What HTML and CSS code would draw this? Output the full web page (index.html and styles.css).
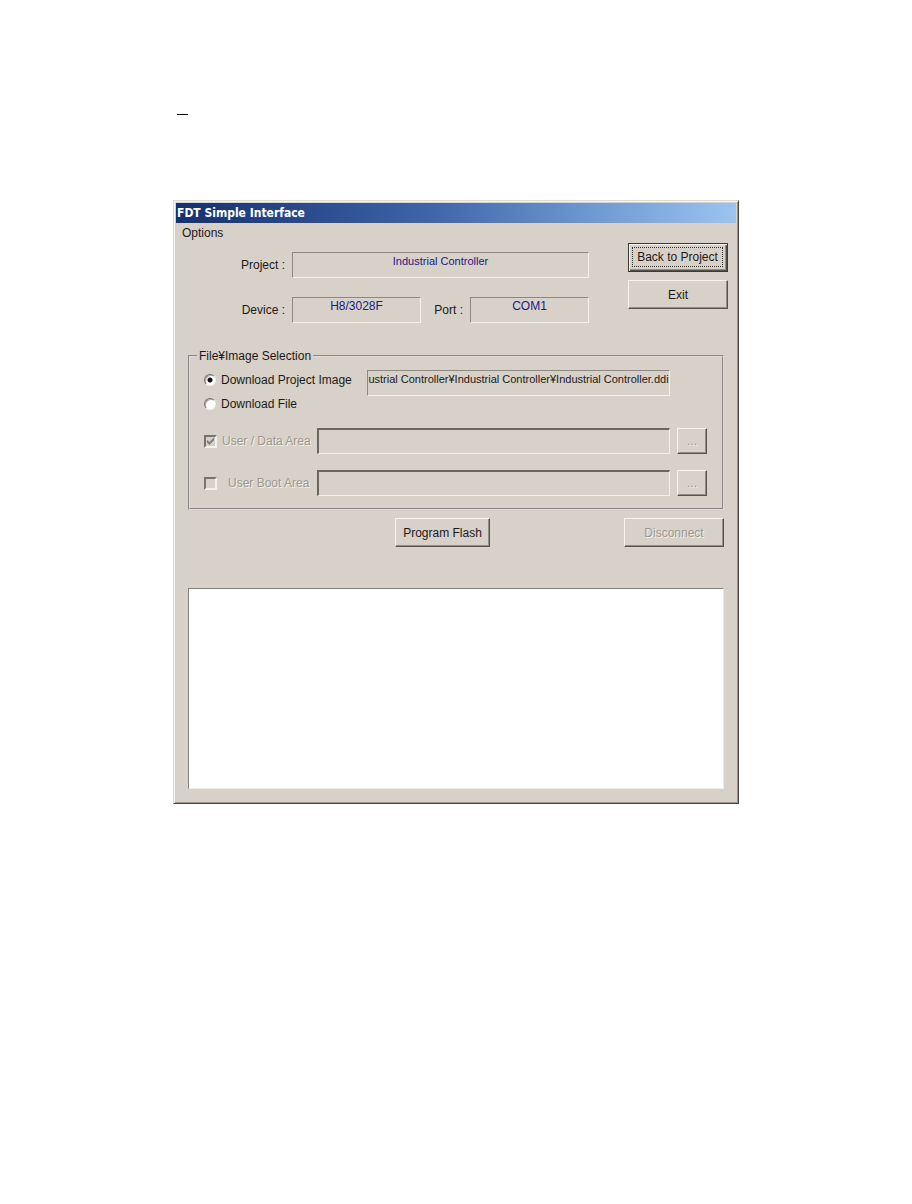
FILE: index.html
```html
<!DOCTYPE html>
<html lang="en">
<head>
  <meta charset="UTF-8">
  <meta name="viewport" content="width=device-width, initial-scale=1.0">
  <link rel="stylesheet" href="styles.css">
  <title>FDT Simple Interface</title>
</head>
<body>
  <div class="mark"></div>
  <div class="window">
    <div class="titlebar">FDT Simple Interface</div>
    <div class="menubar">
      <button class="menu" type="button">Options</button>
    </div>

    <form class="content">
      <div class="top">
        <div class="info">
          <label for="project">Project :</label>
          <output class="field wide long" id="project">Industrial Controller</output>
          <label for="device">Device :</label>
          <output class="field" id="device">H8/3028F</output>
          <label for="port">Port :</label>
          <output class="field" id="port">COM1</output>
        </div>
        <div class="actions">
          <button class="btn default" type="button"><span>Back to Project</span></button>
          <button class="btn" type="button">Exit</button>
        </div>
      </div>

      <fieldset class="group">
        <legend>File¥Image Selection</legend>
        <div class="source">
          <div class="choices">
            <label class="choice"><input class="radio" type="radio" name="source" checked>Download Project Image</label>
            <label class="choice"><input class="radio" type="radio" name="source">Download File</label>
          </div>
          <div class="field long path">ustrial Controller¥Industrial Controller¥Industrial Controller.ddi</div>
        </div>
        <div class="area">
          <label class="choice off"><input class="check" type="checkbox" checked disabled>User / Data Area</label>
          <input class="file" type="text" aria-label="User / Data Area file" disabled>
          <button class="btn browse" type="button" disabled>...</button>
        </div>
        <div class="area">
          <label class="choice off boot"><input class="check" type="checkbox" disabled>User Boot Area</label>
          <input class="file" type="text" aria-label="User Boot Area file" disabled>
          <button class="btn browse" type="button" disabled>...</button>
        </div>
      </fieldset>

      <div class="commands">
        <button class="btn program" type="button">Program Flash</button>
        <button class="btn" type="button" disabled>Disconnect</button>
      </div>

      <textarea class="log" aria-label="Log" readonly></textarea>
    </form>
  </div>
</body>
</html>
```

FILE: styles.css
```css
* {
  box-sizing: border-box;
}
body {
  margin: 0;
  padding: 114px 173px 0;
  background: #fff;
  color: #1c1a18;
  font: 12px/16px "Liberation Sans", Arial, sans-serif;
}
button, input, textarea {
  font: inherit;
  color: inherit;
}
.mark {
  width: 11px;
  margin: 0 0 85px 4px;
  border-top: 1px solid #000;
}

/* window frame */
.window {
  padding: 2px;
  background: #d7d1c9;
  border: 1px solid;
  border-color: #dcdcd6 #45443f #45443f #dcdcd6;
  box-shadow: inset 1px 1px #f6f5f0, inset -1px -1px #96958f;
}
.titlebar {
  height: 20px;
  padding-left: 1px;
  background: linear-gradient(to right, #15306f, #3f64a8 45%, #6f9ad2 75%, #9cc4f0);
  color: #fff;
  font: bold 12px/20px "DejaVu Sans Condensed", "DejaVu Sans", sans-serif;
}
.menubar {
  padding: 2px 0 0 6px;
}
.menu {
  display: block;
  padding: 0;
  border: 0;
  background: none;
}
.content {
  padding: 2px 12px 12px;
}

/* project info */
.top {
  display: flex;
  align-items: flex-start;
  gap: 39px;
  margin-right: -4px;
}
.info {
  flex: 1;
  display: grid;
  grid-template-columns: 104px 129fr 49px 119fr;
  row-gap: 19px;
  padding-top: 9px;
  align-items: center;
}
.info label {
  padding-right: 7px;
  text-align: right;
}
.field {
  height: 26px;
  border: 1px solid;
  border-color: #8d8982 #f3f0ea #f3f0ea #8d8982;
  color: #241a80;
  text-align: center;
  white-space: nowrap;
}
.wide {
  grid-column: span 3;
}
.long {
  font-size: 11px;
}
.actions {
  display: flex;
  flex-direction: column;
  gap: 8px;
}

/* buttons */
.btn {
  width: 100px;
  height: 29px;
  padding: 0;
  background: #d7d1c9;
  border: 1px solid;
  border-color: #f6f3ee #56524c #56524c #f6f3ee;
  box-shadow: inset -1px -1px #918c85;
}
.default {
  padding: 2px;
  border-color: #3c3935;
  box-shadow: inset 1px 1px #f6f3ee, inset -1px -1px #56524c, inset -2px -2px #918c85;
}
.default span {
  display: block;
  margin: 1px 2px 2px 1px;
  border: 1px dotted #35322f;
  line-height: 18px;
}
.btn:disabled, .off {
  color: #9d9890;
  text-shadow: 1px 1px #f3f0ea;
}

/* file / image selection */
.group {
  min-width: 0;
  margin: 25px 0 0;
  padding: 6px 15px 12px 14px;
  border: 2px groove #dedad4;
}
.group legend {
  margin-left: -7px;
  padding: 0 2px;
}
.source {
  display: flex;
  align-items: flex-start;
  margin-right: 37px;
}
.choices {
  flex: none;
  width: 163px;
  padding-top: 2px;
}
.choice {
  display: flex;
  align-items: center;
  gap: 5px;
}
.choices .choice + .choice {
  margin-top: 8px;
}
.path {
  flex: 1;
  min-width: 0;
  color: inherit;
}
.area {
  display: flex;
  align-items: center;
  margin-top: 16px;
}
.area .choice {
  flex: none;
  width: 113px;
}
.boot {
  gap: 11px;
}
.file {
  flex: 1;
  min-width: 0;
  height: 26px;
  background: #d7d1c9;
  border: 2px solid;
  border-color: #6b665f #f3f0ea #f3f0ea #6b665f;
  border-right-width: 1px;
  border-bottom-width: 1px;
}
.browse {
  width: 30px;
  height: 26px;
  margin-left: 7px;
}
.radio, .check {
  flex: none;
  appearance: none;
  width: 13px;
  height: 13px;
  margin: 0;
  border: 2px solid;
  border-color: #77726b #f3f0ea #f3f0ea #77726b;
}
.radio {
  width: 12px;
  height: 12px;
  border-width: 1px;
  border-radius: 50%;
  background: #fff;
  box-shadow: inset 1px 1px #aaa59e;
}
.radio:checked {
  background: radial-gradient(circle, #111 2px, #fff 3px);
}
.check:checked::before {
  content: "";
  display: block;
  height: 9px;
  background: #85807a;
  clip-path: polygon(10% 35%, 38% 62%, 90% 8%, 90% 42%, 38% 95%, 10% 68%);
}

/* bottom part */
.commands {
  display: grid;
  grid-template-columns: 207px 1fr 100px;
  margin: 8px 0 41px;
}
.program {
  grid-column: 2;
  width: 95px;
}
.log {
  display: block;
  width: 100%;
  height: 201px;
  padding: 2px;
  border: 1px solid;
  border-color: #85827c #eeece6 #eeece6 #85827c;
  background: #fff;
  outline: 0;
  resize: none;
}
```
